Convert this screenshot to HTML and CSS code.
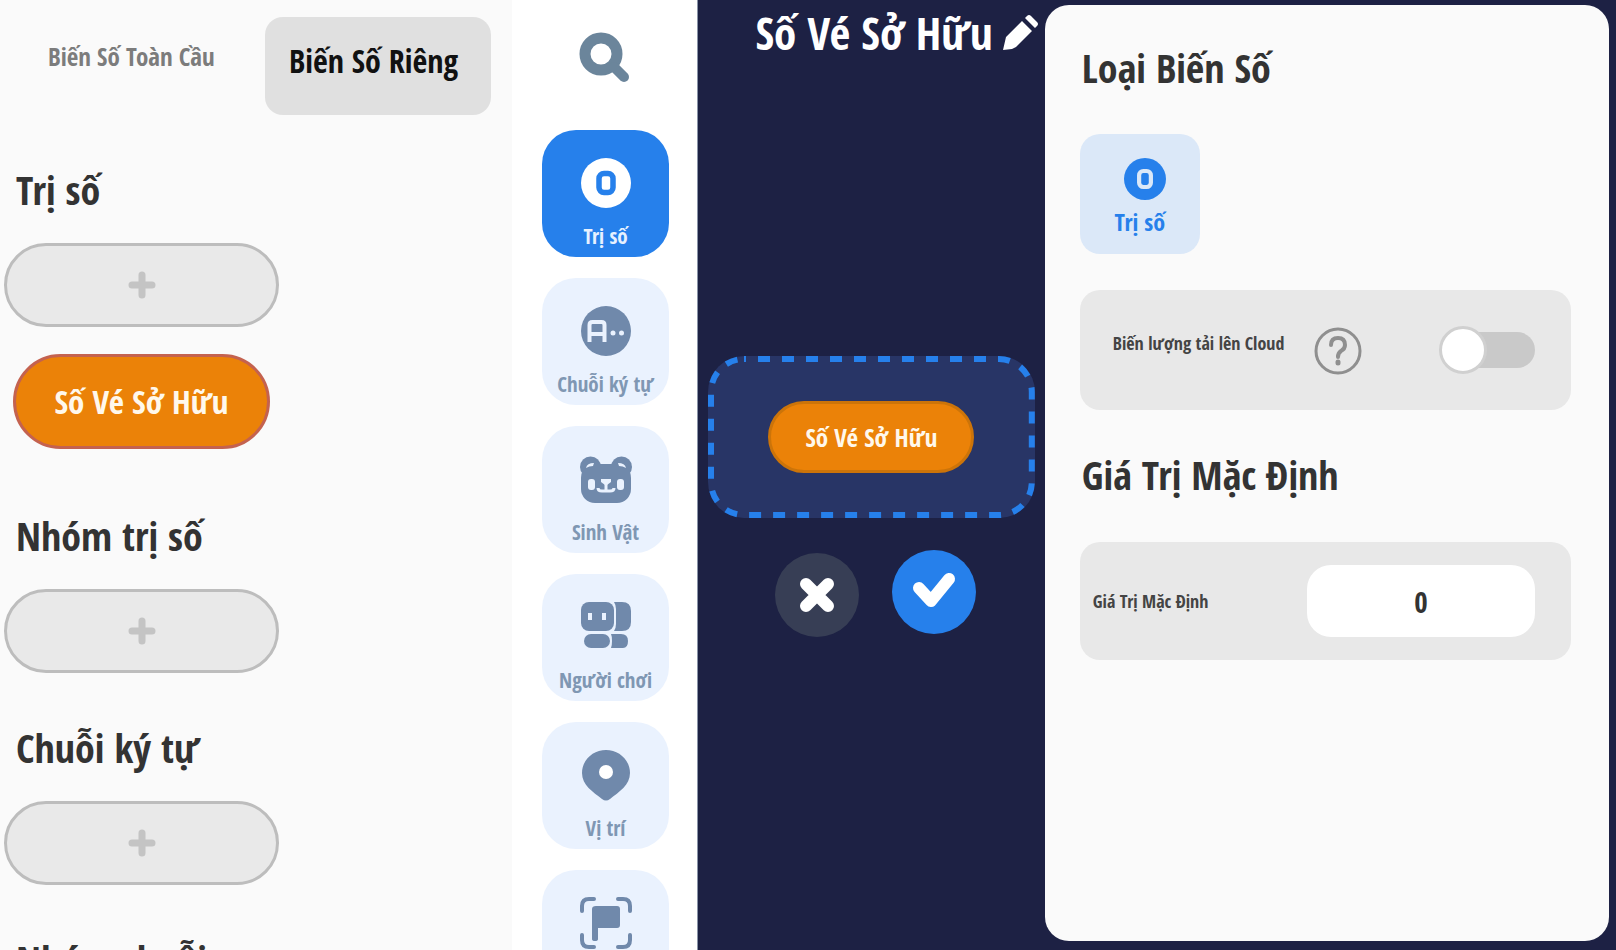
FILE: index.html
```
<!DOCTYPE html>
<html lang="vi">

<head>
    <meta charset="UTF-8">
    <meta name="viewport" content="width=device-width, initial-scale=1.0">
    <title>Biến Số</title>
    <link rel="stylesheet" href="styles.css">
</head>

<body>
    <div class="editor">
        <!-- Variable list -->
        <section class="variables">
            <div class="tabs">
                <button class="tab" type="button">Biến Số Toàn Cầu</button>
                <button class="tab tab-active" type="button">Biến Số Riêng</button>
            </div>

            <div class="group">
                <h2>Trị số</h2>
                <button class="add-button" type="button" aria-label="Thêm trị số">
                    <svg viewBox="0 0 28 28"><path d="M14 4v20M4 14h20" /></svg>
                </button>
                <button class="variable" type="button">Số Vé Sở Hữu</button>
            </div>

            <div class="group">
                <h2>Nhóm trị số</h2>
                <button class="add-button" type="button" aria-label="Thêm nhóm trị số">
                    <svg viewBox="0 0 28 28"><path d="M14 4v20M4 14h20" /></svg>
                </button>
            </div>

            <div class="group">
                <h2>Chuỗi ký tự</h2>
                <button class="add-button" type="button" aria-label="Thêm chuỗi ký tự">
                    <svg viewBox="0 0 28 28"><path d="M14 4v20M4 14h20" /></svg>
                </button>
            </div>

            <div class="group">
                <h2>Nhóm chuỗi</h2>
            </div>
        </section>

        <!-- Type navigation -->
        <nav class="types">
            <button class="search" type="button" aria-label="Tìm kiếm">
                <svg viewBox="0 0 50 50">
                    <circle cx="22" cy="22" r="16" fill="none" stroke="#6b859b" stroke-width="11" />
                    <path d="M35 35l10 10" stroke="#6b859b" stroke-width="10" stroke-linecap="round" />
                </svg>
            </button>

            <button class="type type-active" type="button">
                <svg viewBox="0 0 50 50">
                    <circle cx="25" cy="25" r="25" fill="#fff" />
                    <rect x="18" y="15.500" width="14" height="19" rx="5" fill="none" stroke="#2680eb" stroke-width="5.500" />
                </svg>
                <span>Trị số</span>
            </button>

            <button class="type" type="button">
                <svg viewBox="0 0 50 50">
                    <circle cx="25" cy="25" r="25" fill="#7089ab" />
                    <path d="M8.500 36V19q0-3 3-3h9q3 0 3 3v17M8.500 28h15" fill="none" stroke="#eaf2fe" stroke-width="4" />
                    <circle cx="32" cy="27" r="2.500" fill="#eaf2fe" />
                    <circle cx="40.500" cy="27" r="2.500" fill="#eaf2fe" />
                </svg>
                <span>Chuỗi ký tự</span>
            </button>

            <button class="type" type="button">
                <svg viewBox="0 0 50 50">
                    <g fill="#7089ab">
                        <circle cx="9.500" cy="13" r="10.500" />
                        <circle cx="40.500" cy="13" r="10.500" />
                        <rect x="0" y="10" width="50" height="39" rx="14" />
                    </g>
                    <path d="M5 14q1-5 8-5l-1 3q-4 0-7 2zM45 14q-1-5-8-5l1 3q4 0 7 2z" fill="#eaf2fe" />
                    <rect x="7" y="25" width="7" height="11" rx="3" fill="#eaf2fe" />
                    <rect x="36" y="25" width="7" height="11" rx="3" fill="#eaf2fe" />
                    <path d="M20 25h10v3l-4 3h-2l-4-3z" fill="#eaf2fe" />
                    <path d="M25 29v7M17 34q0 3 4 3h8q4 0 4-3" fill="none" stroke="#eaf2fe" stroke-width="3" />
                </svg>
                <span>Sinh Vật</span>
            </button>

            <button class="type" type="button">
                <svg viewBox="0 0 50 50">
                    <g fill="#7089ab">
                        <rect x="0" y="0" width="33" height="29" rx="8" />
                        <path d="M33 0h8q9 0 9 9v11q0 9-9 9h-8q2-3 2-7V7q0-4-2-7z" />
                        <rect x="3" y="32" width="26" height="14" rx="7" />
                        <path d="M30 32h10q7 0 7 7 0 7-5 7H30q1-2 1-7t-1-7z" />
                    </g>
                    <rect x="7" y="11" width="4" height="7" fill="#eaf2fe" />
                    <rect x="21" y="11" width="4" height="7" fill="#eaf2fe" />
                </svg>
                <span>Người chơi</span>
            </button>

            <button class="type" type="button">
                <svg viewBox="0 0 50 50">
                    <path d="M25 0C12 0 1 10 1 23c0 12 11 19 20 26q4 3 8 0c9-7 20-14 20-26C49 10 38 0 25 0z" fill="#7089ab" />
                    <circle cx="25" cy="22" r="7" fill="#fff" />
                </svg>
                <span>Vị trí</span>
            </button>

            <button class="type" type="button" aria-label="Khu vực">
                <svg viewBox="0 0 50 50">
                    <path d="M1 13V8q0-7 7-7h5M37 1h5q7 0 7 7v5M1 37v5q0 7 7 7h5M37 49h5q7 0 7-7v-5" fill="none" stroke="#7089ab"
                        stroke-width="4" stroke-linecap="round" />
                    <path d="M15 8h21q3 0 3 3v16q0 3-3 3H17v11q0 2-3 2t-3-2V11q0-3 4-3z" fill="#7089ab" />
                </svg>
            </button>
        </nav>

        <!-- Selected variable -->
        <main class="stage">
            <header class="stage-header">
                <h1>Số Vé Sở Hữu</h1>
                <button class="rename" type="button" aria-label="Đổi tên">
                    <svg viewBox="0 0 36 36">
                        <path d="M0 35l3-13L19 6l10 10-16 16-4 2zM22 3l2-2q2-2 4 0l6 6q2 2 0 4l-2 2z" fill="#fff" />
                    </svg>
                </button>
            </header>
            <div class="drop-zone">
                <svg class="outline"><rect x="3" y="3" rx="33" /></svg>
                <span class="block">Số Vé Sở Hữu</span>
            </div>
            <div class="actions">
                <button class="cancel" type="button" aria-label="Hủy">
                    <svg viewBox="0 0 84 84"><path d="M31 31l22 22M53 31L31 53" /></svg>
                </button>
                <button class="confirm" type="button" aria-label="Xác nhận">
                    <svg viewBox="0 0 84 84"><path d="M27 38l12 13 18-22" /></svg>
                </button>
            </div>
        </main>

        <!-- Variable settings -->
        <aside class="settings">
            <h2>Loại Biến Số</h2>
            <button class="kind" type="button">
                <svg viewBox="0 0 50 50">
                    <circle cx="25" cy="25" r="25" fill="#2680eb" />
                    <rect x="18" y="15.500" width="14" height="19" rx="5" fill="none" stroke="#dbe8f8" stroke-width="5" />
                </svg>
                <span>Trị số</span>
            </button>

            <div class="card cloud-card">
                <label for="cloud">Biến lượng tải lên Cloud</label>
                <button class="help" type="button" aria-label="Trợ giúp">
                    <svg viewBox="0 0 48 48">
                        <circle cx="24" cy="24" r="22" stroke-width="3" />
                        <path d="M17 18q0-7 7-7t7 7q0 4-4 6-3 2-3 6" stroke-width="4" stroke-linecap="round" />
                        <path d="M24 35v1" stroke-width="5" stroke-linecap="round" />
                    </svg>
                </button>
                <input class="switch" id="cloud" type="checkbox">
            </div>

            <h2>Giá Trị Mặc Định</h2>
            <div class="card value-card">
                <label for="default-value">Giá Trị Mặc Định</label>
                <input class="value" id="default-value" type="text" value="0">
            </div>
        </aside>
    </div>
</body>

</html>
```
FILE: styles.css
```
*,
*::before {
    box-sizing: border-box;
}

body {
    margin: 0;
    font-family: "Open Sans Condensed", "Open Sans", "Noto Sans", sans-serif;
    font-weight: 600;
    background-color: #1d2144;
    color: #333;
}

h1,
h2 {
    margin: 0;
    font-weight: 600;
}

button,
input {
    margin: 0;
    padding: 0;
    border: none;
    background: none;
    font: inherit;
    color: inherit;
}

button {
    cursor: pointer;
}

svg {
    display: block;
}

.editor {
    display: grid;
    grid-template-columns: 512px 186px 17fr 28fr;
    height: 100vh;
    overflow: hidden;
}

/* Variable list */
.variables {
    background-color: #fafafa;
    padding-top: 17px;
    overflow: hidden;
}

.tabs {
    display: flex;
    margin-bottom: 48px;
}

.tab {
    display: flex;
    width: 265px;
    height: 98px;
    padding: 21px 0 0 48px;
    font-size: 25px;
    line-height: 36px;
    color: #7c7c7c;
}

.tab-active {
    width: 226px;
    padding-left: 24px;
    border-radius: 18px;
    background-color: #e0e0e0;
    font-size: 32px;
    line-height: 46px;
    color: #111;
}

.group {
    display: flex;
    flex-direction: column;
    align-items: flex-start;
    margin-bottom: 48px;
}

.group h2 {
    padding-left: 16px;
    margin-bottom: 26px;
}

h2 {
    font-size: 40px;
    line-height: 54px;
}

.add-button {
    display: flex;
    align-items: center;
    justify-content: center;
    width: 275px;
    height: 84px;
    margin-left: 4px;
    border: 3px solid #bdbdbd;
    border-radius: 42px;
    background-color: #e9e9e9;
}

.add-button svg {
    width: 28px;
    fill: none;
    stroke: #c4c4c4;
    stroke-width: 7;
    stroke-linecap: round;
}

.variable {
    width: 257px;
    height: 95px;
    margin: 27px 0 12px 13px;
    border: 3px solid #c4624f;
    border-radius: 48px;
    background-color: #eb8208;
    font-size: 33px;
    color: #fff8ec;
}

/* Type navigation */
.types {
    display: flex;
    flex-direction: column;
    align-items: center;
    gap: 21px;
    padding: 32px 0 0 2px;
    border-right: 1px solid #8a94a8;
    background-color: #fff;
    overflow: hidden;
}

.search {
    margin: 0 4px 27px 0;
}

.search svg {
    width: 50px;
}

.type {
    display: flex;
    flex: none;
    flex-direction: column;
    align-items: center;
    gap: 12px;
    width: 127px;
    height: 127px;
    padding-top: 28px;
    border-radius: 34px;
    background-color: #eaf2fe;
    font-size: 21px;
    line-height: 32px;
    color: #7f97b3;
}

.type svg {
    width: 50px;
    overflow: visible;
}

.type-active {
    background-color: #2680eb;
    color: #e6f1ff;
}

/* Selected variable */
.stage {
    display: flex;
    flex-direction: column;
    align-items: center;
    min-width: 0;
}

.stage-header {
    display: flex;
    align-items: center;
    align-self: flex-end;
    gap: 10px;
    height: 66px;
    margin-right: 6px;
}

.stage-header h1 {
    font-size: 45px;
    line-height: 66px;
    color: #fff;
    white-space: nowrap;
}

.rename svg {
    width: 36px;
}

.drop-zone {
    position: relative;
    display: flex;
    align-items: center;
    justify-content: center;
    align-self: stretch;
    height: 162px;
    margin: 290px 10px 32px;
    border-radius: 36px;
    background-color: #283566;
}

.outline {
    position: absolute;
    inset: 0;
    width: 100%;
    height: 100%;
    fill: none;
    stroke: #2680eb;
    stroke-width: 6;
    stroke-dasharray: 12 12;
    stroke-dashoffset: 10;
}

.outline rect {
    width: calc(100% - 6px);
    height: calc(100% - 6px);
}

.block {
    width: 206px;
    border: 3px solid #cc7409;
    border-radius: 36px;
    background-color: #eb8208;
    font-size: 25px;
    line-height: 66px;
    text-align: center;
    color: #fff8ec;
}

.actions {
    display: flex;
    align-items: flex-start;
    gap: 33px;
    padding-left: 8px;
}

.actions button {
    width: 84px;
    border-radius: 50%;
}

.actions path {
    fill: none;
    stroke: #fff;
    stroke-width: 12;
    stroke-linecap: round;
    stroke-linejoin: round;
}

.cancel {
    margin-top: 3px;
    background-color: #373e55;
}

.confirm {
    background-color: #2680eb;
}

/* Variable settings */
.settings {
    margin: 5px 7px 9px 0;
    padding: 36px 38px 0 35px;
    border-radius: 24px;
    background-color: #fafafa;
}

.settings h2 {
    margin-left: 2px;
}

.kind {
    display: flex;
    flex-direction: column;
    align-items: center;
    gap: 6px;
    width: 120px;
    height: 120px;
    margin: 39px 0 36px;
    padding-top: 24px;
    border-radius: 20px;
    background-color: #dbe8f8;
    font-size: 24px;
    line-height: 32px;
    color: #2680eb;
}

.kind svg {
    width: 42px;
    margin-left: 10px;
}

.card {
    display: flex;
    align-items: center;
    height: 120px;
    border-radius: 20px;
    background-color: #e8e8e8;
    font-size: 18px;
    line-height: 28px;
    color: #444;
}

.cloud-card {
    margin-bottom: 38px;
    padding: 0 36px 0 33px;
}

.cloud-card label {
    padding-bottom: 14px;
}

.help {
    margin: 2px auto 0 30px;
}

.help svg {
    width: 48px;
    fill: none;
    stroke: #8f8f8f;
}

.switch {
    position: relative;
    width: 92px;
    height: 36px;
    border-radius: 18px;
    background-color: #c9c9c9;
    appearance: none;
    cursor: pointer;
}

.switch::before {
    content: "";
    position: absolute;
    top: -6px;
    left: -4px;
    width: 48px;
    height: 48px;
    border: 3px solid #d0d0d0;
    border-radius: 50%;
    background-color: #fff;
}

.switch:checked {
    background-color: #2680eb;
}

.switch:checked::before {
    left: 48px;
}

.value-card {
    justify-content: space-between;
    height: 118px;
    margin-top: 40px;
    padding: 0 36px 0 13px;
}

.value {
    width: 228px;
    height: 72px;
    border-radius: 24px;
    background-color: #fff;
    font-size: 29px;
    text-align: center;
    color: #333;
}
```
